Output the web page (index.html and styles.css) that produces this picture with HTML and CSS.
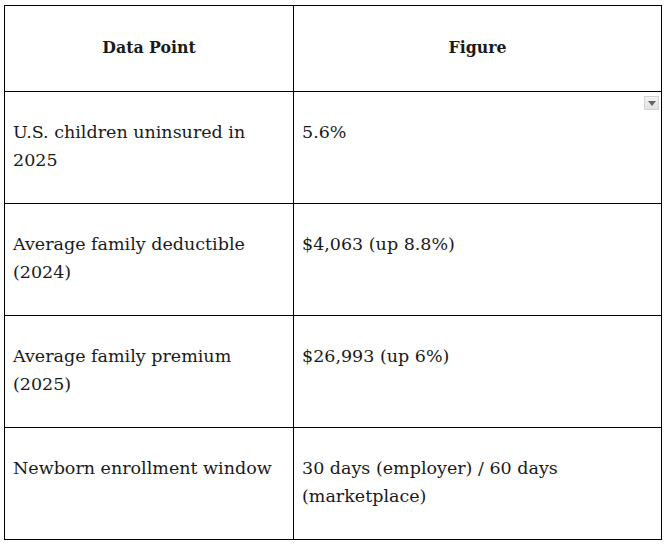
FILE: index.html
```
<!DOCTYPE html>
<html lang="en">
<head>
<meta charset="utf-8">
<title>Data table</title>
<link rel="stylesheet" href="styles.css">
</head>
<body>
<table class="data-table">
  <thead>
    <tr class="head-row">
      <th class="col-a">Data Point</th>
      <th class="col-b">Figure</th>
    </tr>
  </thead>
  <tbody>
    <tr class="body-row">
      <td>U.S. children uninsured in 2025</td>
      <td class="has-menu">5.6%<span class="menu-btn"><svg width="8" height="5" viewBox="0 0 8 5"><path d="M0 0H8L4 5Z" fill="#666"/></svg></span></td>
    </tr>
    <tr class="body-row">
      <td>Average family deductible (2024)</td>
      <td>$4,063 (up 8.8%)</td>
    </tr>
    <tr class="body-row">
      <td>Average family premium (2025)</td>
      <td>$26,993 (up 6%)</td>
    </tr>
    <tr class="body-row">
      <td>Newborn enrollment window</td>
      <td>30 days (employer) / 60 days (marketplace)</td>
    </tr>
  </tbody>
</table>
</body>
</html>
```
FILE: styles.css
```
html, body {
  margin: 0;
  background: #fff;
}
body {
  padding: 5px 0 0 4px;
  font-family: "DejaVu Serif", "Liberation Serif", serif;
  color: #1a1a1a;
}
.data-table {
  border-collapse: collapse;
  width: 658px;
  table-layout: fixed;
  font-size: 17.5px;
  line-height: 28px;
}
.data-table th,
.data-table td {
  border: 1px solid #000;
  text-align: left;
  padding: 0 8px;
}
.col-a { width: 272px; }
.head-row th {
  height: 82px;
  padding-bottom: 3px;
  text-align: center;
  vertical-align: middle;
  font-family: "DejaVu Serif Condensed", "DejaVu Serif", serif;
  font-stretch: condensed;
  font-weight: bold;
}
.body-row td {
  height: 84px;
  vertical-align: top;
  padding-top: 26px;
  padding-bottom: 1px;
}
.has-menu {
  position: relative;
}
.menu-btn {
  position: absolute;
  top: 4px;
  right: 2px;
  width: 15px;
  height: 14px;
  box-sizing: border-box;
  border: 1px solid #d4d4d4;
  background: linear-gradient(#f4f4f4, #e2e2e2);
  display: flex;
  align-items: center;
  justify-content: center;
}
.menu-btn svg { display: block; }
```
